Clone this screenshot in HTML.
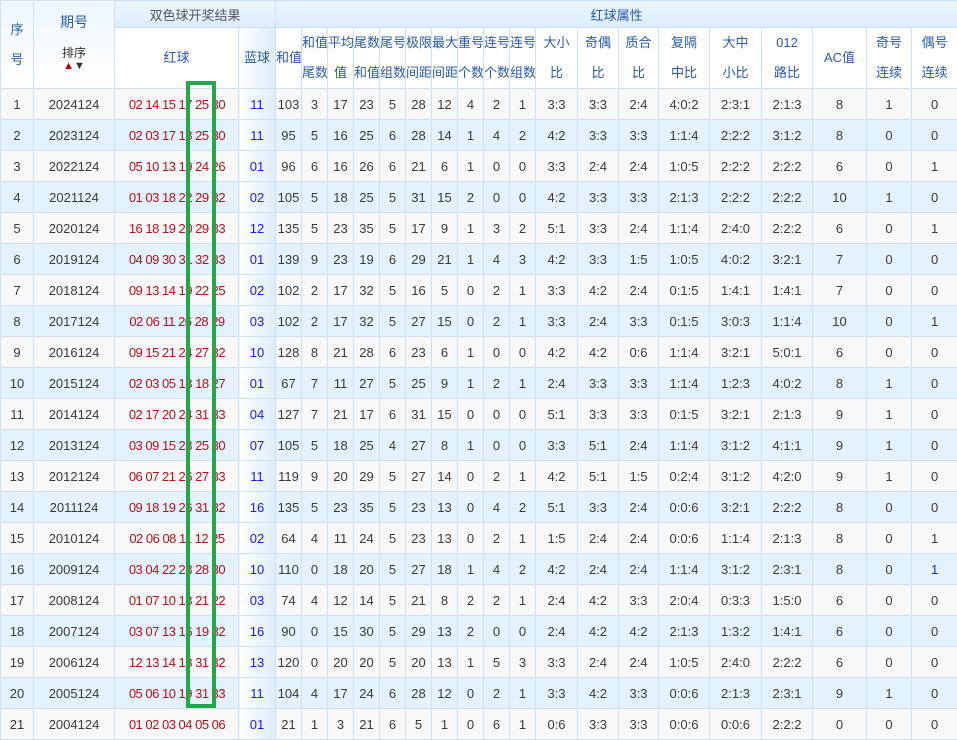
<!DOCTYPE html>
<html><head><meta charset="utf-8">
<style>
body{margin:0;width:957px;height:713px;overflow:hidden;background:#fff;font-family:"Liberation Sans","Noto Sans CJK SC",sans-serif;}
table{border-collapse:collapse;table-layout:fixed;position:absolute;left:0;top:0;width:957px;}
td,th{border:1px solid #cfe1f1;text-align:center;padding:0;font-size:13px;color:#3a3a3a;font-weight:normal;white-space:nowrap;overflow:hidden;}
thead th{color:#2a5ba8;}
tr.h1 th{height:26px;background:linear-gradient(#eef7fe,#d9ecfb);}
tr.h2 th{height:60px;background:#fff;line-height:30px;}
tr.h2 th.bl{background:linear-gradient(90deg,#fff,#dcedfb);}
tbody td{height:30px;}
tbody tr:nth-child(odd) td{background:#f8f8f8;}
tbody tr:nth-child(even) td{background:#e3f2fd;}
tbody td.r{color:#b5121b;text-align:center;font-size:13px;letter-spacing:-0.5px;word-spacing:0;padding-left:1px;}
tbody td.b{color:#1a1aee;background:linear-gradient(90deg,#fff,#dcedfb)!important;}
.box{position:absolute;left:186px;top:81px;width:22px;height:619px;border:4px solid #22a84a;}
.ar{font-size:11px;line-height:10px;}
</style></head><body>
<table>
<colgroup>
<col style="width:33px"><col style="width:81px"><col style="width:124px"><col style="width:37px">
<col style="width:26px"><col style="width:26px"><col style="width:26px"><col style="width:26px"><col style="width:26px"><col style="width:26px"><col style="width:26px"><col style="width:26px"><col style="width:26px"><col style="width:26px">
<col style="width:42px"><col style="width:41px"><col style="width:40px"><col style="width:51px"><col style="width:52px"><col style="width:51px"><col style="width:54px"><col style="width:45px"><col style="width:46px">
</colgroup>
<thead>
<tr class="h1"><th rowspan="2" style="background:linear-gradient(#eef7fe,#fff);line-height:30px">序<br>号</th><th rowspan="2" style="background:linear-gradient(#eef7fe,#fff)"><div style="font-size:14px;margin-top:-6px">期号</div><div style="font-size:12px;color:#333;margin-top:12px">排序</div><div class="ar"><span style="color:#b00">▲</span><span style="color:#333">▼</span></div></th><th colspan="2" style="color:#555">双色球开奖结果</th><th colspan="19">红球属性</th></tr>
<tr class="h2"><th>红球</th><th class="bl">蓝球</th><th>和值</th><th>和值<br>尾数</th><th>平均<br>值</th><th>尾数<br>和值</th><th>尾号<br>组数</th><th>极限<br>间距</th><th>最大<br>间距</th><th>重号<br>个数</th><th>连号<br>个数</th><th>连号<br>组数</th><th>大小<br>比</th><th>奇偶<br>比</th><th>质合<br>比</th><th>复隔<br>中比</th><th>大中<br>小比</th><th>012<br>路比</th><th>AC值</th><th>奇号<br>连续</th><th>偶号<br>连续</th></tr>
</thead>
<tbody>
<tr><td>1</td><td>2024124</td><td class="r">02 14 15 17 25 30</td><td class="b">11</td><td>103</td><td>3</td><td>17</td><td>23</td><td>5</td><td>28</td><td>12</td><td>4</td><td>2</td><td>1</td><td>3:3</td><td>3:3</td><td>2:4</td><td>4:0:2</td><td>2:3:1</td><td>2:1:3</td><td>8</td><td>1</td><td>0</td></tr>
<tr><td>2</td><td>2023124</td><td class="r">02 03 17 18 25 30</td><td class="b">11</td><td>95</td><td>5</td><td>16</td><td>25</td><td>6</td><td>28</td><td>14</td><td>1</td><td>4</td><td>2</td><td>4:2</td><td>3:3</td><td>3:3</td><td>1:1:4</td><td>2:2:2</td><td>3:1:2</td><td>8</td><td>0</td><td>0</td></tr>
<tr><td>3</td><td>2022124</td><td class="r">05 10 13 19 24 26</td><td class="b">01</td><td>96</td><td>6</td><td>16</td><td>26</td><td>6</td><td>21</td><td>6</td><td>1</td><td>0</td><td>0</td><td>3:3</td><td>2:4</td><td>2:4</td><td>1:0:5</td><td>2:2:2</td><td>2:2:2</td><td>6</td><td>0</td><td>1</td></tr>
<tr><td>4</td><td>2021124</td><td class="r">01 03 18 22 29 32</td><td class="b">02</td><td>105</td><td>5</td><td>18</td><td>25</td><td>5</td><td>31</td><td>15</td><td>2</td><td>0</td><td>0</td><td>4:2</td><td>3:3</td><td>3:3</td><td>2:1:3</td><td>2:2:2</td><td>2:2:2</td><td>10</td><td>1</td><td>0</td></tr>
<tr><td>5</td><td>2020124</td><td class="r">16 18 19 20 29 33</td><td class="b">12</td><td>135</td><td>5</td><td>23</td><td>35</td><td>5</td><td>17</td><td>9</td><td>1</td><td>3</td><td>2</td><td>5:1</td><td>3:3</td><td>2:4</td><td>1:1:4</td><td>2:4:0</td><td>2:2:2</td><td>6</td><td>0</td><td>1</td></tr>
<tr><td>6</td><td>2019124</td><td class="r">04 09 30 31 32 33</td><td class="b">01</td><td>139</td><td>9</td><td>23</td><td>19</td><td>6</td><td>29</td><td>21</td><td>1</td><td>4</td><td>3</td><td>4:2</td><td>3:3</td><td>1:5</td><td>1:0:5</td><td>4:0:2</td><td>3:2:1</td><td>7</td><td>0</td><td>0</td></tr>
<tr><td>7</td><td>2018124</td><td class="r">09 13 14 19 22 25</td><td class="b">02</td><td>102</td><td>2</td><td>17</td><td>32</td><td>5</td><td>16</td><td>5</td><td>0</td><td>2</td><td>1</td><td>3:3</td><td>4:2</td><td>2:4</td><td>0:1:5</td><td>1:4:1</td><td>1:4:1</td><td>7</td><td>0</td><td>0</td></tr>
<tr><td>8</td><td>2017124</td><td class="r">02 06 11 26 28 29</td><td class="b">03</td><td>102</td><td>2</td><td>17</td><td>32</td><td>5</td><td>27</td><td>15</td><td>0</td><td>2</td><td>1</td><td>3:3</td><td>2:4</td><td>3:3</td><td>0:1:5</td><td>3:0:3</td><td>1:1:4</td><td>10</td><td>0</td><td>1</td></tr>
<tr><td>9</td><td>2016124</td><td class="r">09 15 21 24 27 32</td><td class="b">10</td><td>128</td><td>8</td><td>21</td><td>28</td><td>6</td><td>23</td><td>6</td><td>1</td><td>0</td><td>0</td><td>4:2</td><td>4:2</td><td>0:6</td><td>1:1:4</td><td>3:2:1</td><td>5:0:1</td><td>6</td><td>0</td><td>0</td></tr>
<tr><td>10</td><td>2015124</td><td class="r">02 03 05 13 18 27</td><td class="b">01</td><td>67</td><td>7</td><td>11</td><td>27</td><td>5</td><td>25</td><td>9</td><td>1</td><td>2</td><td>1</td><td>2:4</td><td>3:3</td><td>3:3</td><td>1:1:4</td><td>1:2:3</td><td>4:0:2</td><td>8</td><td>1</td><td>0</td></tr>
<tr><td>11</td><td>2014124</td><td class="r">02 17 20 24 31 33</td><td class="b">04</td><td>127</td><td>7</td><td>21</td><td>17</td><td>6</td><td>31</td><td>15</td><td>0</td><td>0</td><td>0</td><td>5:1</td><td>3:3</td><td>3:3</td><td>0:1:5</td><td>3:2:1</td><td>2:1:3</td><td>9</td><td>1</td><td>0</td></tr>
<tr><td>12</td><td>2013124</td><td class="r">03 09 15 23 25 30</td><td class="b">07</td><td>105</td><td>5</td><td>18</td><td>25</td><td>4</td><td>27</td><td>8</td><td>1</td><td>0</td><td>0</td><td>3:3</td><td>5:1</td><td>2:4</td><td>1:1:4</td><td>3:1:2</td><td>4:1:1</td><td>9</td><td>1</td><td>0</td></tr>
<tr><td>13</td><td>2012124</td><td class="r">06 07 21 26 27 33</td><td class="b">11</td><td>119</td><td>9</td><td>20</td><td>29</td><td>5</td><td>27</td><td>14</td><td>0</td><td>2</td><td>1</td><td>4:2</td><td>5:1</td><td>1:5</td><td>0:2:4</td><td>3:1:2</td><td>4:2:0</td><td>9</td><td>1</td><td>0</td></tr>
<tr><td>14</td><td>2011124</td><td class="r">09 18 19 26 31 32</td><td class="b">16</td><td>135</td><td>5</td><td>23</td><td>35</td><td>5</td><td>23</td><td>13</td><td>0</td><td>4</td><td>2</td><td>5:1</td><td>3:3</td><td>2:4</td><td>0:0:6</td><td>3:2:1</td><td>2:2:2</td><td>8</td><td>0</td><td>0</td></tr>
<tr><td>15</td><td>2010124</td><td class="r">02 06 08 11 12 25</td><td class="b">02</td><td>64</td><td>4</td><td>11</td><td>24</td><td>5</td><td>23</td><td>13</td><td>0</td><td>2</td><td>1</td><td>1:5</td><td>2:4</td><td>2:4</td><td>0:0:6</td><td>1:1:4</td><td>2:1:3</td><td>8</td><td>0</td><td>1</td></tr>
<tr><td>16</td><td>2009124</td><td class="r">03 04 22 23 28 30</td><td class="b">10</td><td>110</td><td>0</td><td>18</td><td>20</td><td>5</td><td>27</td><td>18</td><td>1</td><td>4</td><td>2</td><td>4:2</td><td>2:4</td><td>2:4</td><td>1:1:4</td><td>3:1:2</td><td>2:3:1</td><td>8</td><td>0</td><td style="color:#1a1aee">1</td></tr>
<tr><td>17</td><td>2008124</td><td class="r">01 07 10 13 21 22</td><td class="b">03</td><td>74</td><td>4</td><td>12</td><td>14</td><td>5</td><td>21</td><td>8</td><td>2</td><td>2</td><td>1</td><td>2:4</td><td>4:2</td><td>3:3</td><td>2:0:4</td><td>0:3:3</td><td>1:5:0</td><td>6</td><td>0</td><td>0</td></tr>
<tr><td>18</td><td>2007124</td><td class="r">03 07 13 16 19 32</td><td class="b">16</td><td>90</td><td>0</td><td>15</td><td>30</td><td>5</td><td>29</td><td>13</td><td>2</td><td>0</td><td>0</td><td>2:4</td><td>4:2</td><td>4:2</td><td>2:1:3</td><td>1:3:2</td><td>1:4:1</td><td>6</td><td>0</td><td>0</td></tr>
<tr><td>19</td><td>2006124</td><td class="r">12 13 14 18 31 32</td><td class="b">13</td><td>120</td><td>0</td><td>20</td><td>20</td><td>5</td><td>20</td><td>13</td><td>1</td><td>5</td><td>3</td><td>3:3</td><td>2:4</td><td>2:4</td><td>1:0:5</td><td>2:4:0</td><td>2:2:2</td><td>6</td><td>0</td><td>0</td></tr>
<tr><td>20</td><td>2005124</td><td class="r">05 06 10 19 31 33</td><td class="b">11</td><td>104</td><td>4</td><td>17</td><td>24</td><td>6</td><td>28</td><td>12</td><td>0</td><td>2</td><td>1</td><td>3:3</td><td>4:2</td><td>3:3</td><td>0:0:6</td><td>2:1:3</td><td>2:3:1</td><td>9</td><td>1</td><td>0</td></tr>
<tr><td>21</td><td>2004124</td><td class="r">01 02 03 04 05 06</td><td class="b">01</td><td>21</td><td>1</td><td>3</td><td>21</td><td>6</td><td>5</td><td>1</td><td>0</td><td>6</td><td>1</td><td>0:6</td><td>3:3</td><td>3:3</td><td>0:0:6</td><td>0:0:6</td><td>2:2:2</td><td>0</td><td>0</td><td>0</td></tr>
</tbody>
</table>
<div class="box"></div>
</body></html>
